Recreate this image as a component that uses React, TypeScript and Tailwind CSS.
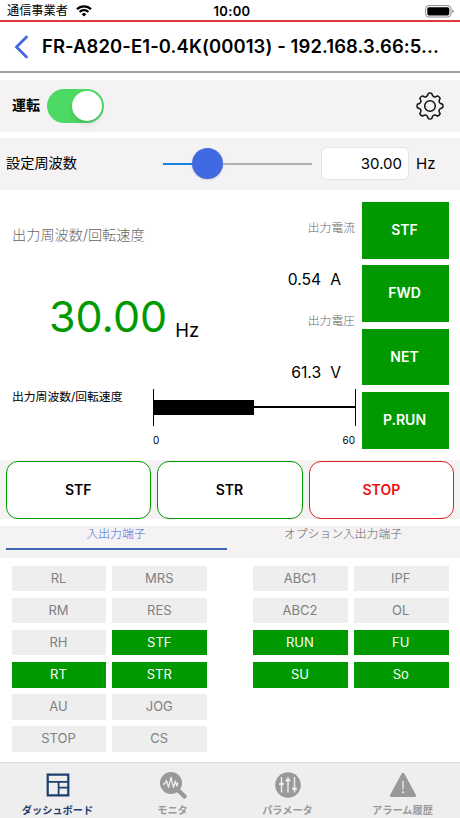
import React from 'react';

const GREEN = 'bg-[#009900]';

const statuses = ['STF', 'FWD', 'NET', 'P.RUN'];

const inputTerminals = [
  { name: 'RL', on: false },
  { name: 'MRS', on: false },
  { name: 'RM', on: false },
  { name: 'RES', on: false },
  { name: 'RH', on: false },
  { name: 'STF', on: true },
  { name: 'RT', on: true },
  { name: 'STR', on: true },
  { name: 'AU', on: false },
  { name: 'JOG', on: false },
  { name: 'STOP', on: false },
  { name: 'CS', on: false }
];

const outputTerminals = [
  { name: 'ABC1', on: false },
  { name: 'IPF', on: false },
  { name: 'ABC2', on: false },
  { name: 'OL', on: false },
  { name: 'RUN', on: true },
  { name: 'FU', on: true },
  { name: 'SU', on: true },
  { name: 'So', on: true }
];

const tabs = [
  { label: 'ダッシュボード', icon: DashboardIcon, active: true },
  { label: 'モニタ', icon: MonitorIcon, active: false },
  { label: 'パラメータ', icon: ParameterIcon, active: false },
  { label: 'アラーム履歴', icon: AlarmIcon, active: false }
];

// Eight-toothed outline: each tooth is a flat tip joined to the next by a valley
function gearPath() {
  const point = (radius: number, deg: number) => {
    const rad = (deg * Math.PI) / 180;
    return `${(14 + radius * Math.sin(rad)).toFixed(2)} ${(14 - radius * Math.cos(rad)).toFixed(2)}`;
  };
  let d = `M${point(12.7, -8)}`;
  for (let i = 0; i < 8; i++) {
    const a = i * 45;
    d += `Q${point(13.3, a)} ${point(12.7, a + 8)}`;
    d += `L${point(10.9, a + 13)}`;
    d += `Q${point(9.3, a + 22.5)} ${point(10.9, a + 32)}`;
    d += `L${point(12.7, a + 37)}`;
  }
  return `${d}Z`;
}

function GearIcon() {
  return (
    <svg width="28" height="28" viewBox="0 0 28 28" fill="none" stroke="#111" strokeWidth="1.5" strokeLinejoin="round">
      <path d={gearPath()} />
      <circle cx="14" cy="14" r="5.3" />
    </svg>
  );
}

function DashboardIcon() {
  return (
    <svg width="24" height="24" viewBox="0 0 24 24" fill="none" stroke="currentColor">
      <path d="M1.7 1.7h20.6v20.6H1.7z" strokeWidth="2.2" />
      <path d="M2 8.8h20M12.6 8.8v13.4M12.6 14.6H22" strokeWidth="1.8" />
    </svg>
  );
}

function MonitorIcon() {
  return (
    <svg width="28" height="28" viewBox="0 0 28 28" fill="none">
      <circle cx="12" cy="12" r="11" fill="currentColor" />
      <path d="M19.5 19.5l6 6" stroke="currentColor" strokeWidth="4.4" strokeLinecap="round" />
      <path d="M4 13h1.8l1.7-3.6 2 7L12 6.4l2.4 10 2-6.4 1.4 5 1.2-3.4" stroke="#eee" strokeWidth="1.3" strokeLinejoin="round" />
    </svg>
  );
}

function ParameterIcon() {
  return (
    <svg width="26" height="26" viewBox="0 0 26 26" fill="none">
      <circle cx="13" cy="13" r="12.8" fill="currentColor" />
      <path d="M6.5 5v15.5M13 5v15.5M19.5 5v15.5" stroke="#eee" strokeWidth="1.4" />
      <path d="M5.3 12h2.4M11.8 8.2h2.4M18.3 16.8h2.4" stroke="#eee" strokeWidth="2.6" strokeLinecap="round" />
    </svg>
  );
}

function AlarmIcon() {
  return (
    <svg width="28" height="26" viewBox="0 0 28 26" fill="none">
      <path d="M14 2.2L25.6 23.6H2.4z" fill="currentColor" stroke="currentColor" strokeWidth="3" strokeLinejoin="round" />
      <path d="M14 9.5v7.4" stroke="#eee" strokeWidth="1.3" strokeLinecap="round" />
      <circle cx="14" cy="20.2" r="1" fill="#eee" />
    </svg>
  );
}

function StatusBar() {
  return (
    <div className="grid h-5 shrink-0 grid-cols-3 items-center pt-[3px] pl-[10px] pr-1.5">
      <div className="-ml-[3px] flex items-center gap-2">
        <span className="text-[12.2px] leading-none">通信事業者</span>
        <svg width="16" height="12" viewBox="0 0 16 12" fill="none" stroke="#000" strokeWidth="2.3">
          <path d="M1 4.3a10 10 0 0 1 14 0" />
          <path d="M3.6 7a6.2 6.2 0 0 1 8.8 0" />
          <path d="M8 11.6L5.7 9.2a3.3 3.3 0 0 1 4.6 0z" fill="#000" stroke="none" />
        </svg>
      </div>
      <span className="text-center text-[13px] font-semibold leading-none tracking-[0.3px]">10:00</span>
      <div className="flex justify-end">
        <svg width="29" height="13" viewBox="0 0 29 13">
          <rect x="0.6" y="0.6" width="25.4" height="11.4" rx="3.2" fill="none" stroke="#8a8a8a" />
          <rect x="2.3" y="2.2" width="22" height="8.2" rx="1.6" />
          <path d="M27.2 4.3v4a2.2 2.2 0 0 0 0-4z" fill="#8a8a8a" />
        </svg>
      </div>
    </div>
  );
}

function TerminalGrid({ items }: { items: { name: string; on: boolean }[] }) {
  return (
    <div className="grid w-[195.6px] grid-cols-2 content-start gap-x-1.5 gap-y-[6.7px]">
      {items.map((item) => (
        <div
          key={item.name}
          className={`flex h-[25.5px] items-center justify-center pr-px text-[13px] ${item.on ? `${GREEN} text-white` : 'bg-[#eeeeee] text-[#808080]'}`}
        >
          {item.name}
        </div>
      ))}
    </div>
  );
}

export default function App() {
  return (
    <div className="flex h-[818px] w-[460px] flex-col overflow-hidden whitespace-nowrap bg-white font-[Inter,'Noto_Sans_CJK_JP',sans-serif] text-black">
      <StatusBar />

      <header className="flex h-[53px] shrink-0 items-center border-t-2 border-b-2 border-t-[#e0393d] border-b-[#9fa3a2] pl-[14px]">
        <svg width="15" height="24" viewBox="0 0 15 24" fill="none" stroke="#4169e1" strokeWidth="2.8" strokeLinecap="round">
          <path d="M12.5 2L2.5 12l10 10" />
        </svg>
        <h1 className="ml-[13px] pt-px text-[18.4px] font-semibold tracking-[0.12px]">
          FR-A820-E1-0.4K(00013) - 192.168.3.66:5...
        </h1>
      </header>

      <div className="mt-[7px] flex h-[52px] shrink-0 items-center bg-[#f4f2f3] pl-3 pr-4">
        <span className="pb-[3px] text-[14px] font-bold">運転</span>
        <div className="ml-[7px] flex h-[34px] w-[57px] items-center justify-end rounded-full bg-[#4cd964] pr-[2px]">
          <div className="h-[30px] w-[30px] rounded-full bg-white shadow-md" />
        </div>
        <div className="ml-auto">
          <GearIcon />
        </div>
      </div>

      <div className="mt-1.5 flex h-[52px] shrink-0 items-center bg-[#f4f2f3] pl-1.5 pb-px">
        <span className="w-[157px] pb-px text-[14.2px]">設定周波数</span>
        <div className="flex w-[149px] items-center">
          <div className="h-[2px] w-[29px] bg-[#1a82e0]" />
          <div className="h-[31px] w-[31px] rounded-full bg-[#4169e1] shadow" />
          <div className="h-[2px] flex-1 bg-[#b1b0b1]" />
        </div>
        <div className="ml-[9px] flex h-[33px] w-[88px] items-center justify-end rounded-md border border-[#e4e4e4] bg-white pt-px pr-1.5 text-[15px]">
          30.00
        </div>
        <span className="ml-[7px] pt-px text-[15px]">Hz</span>
      </div>

      <section className="flex h-[270px] shrink-0">
        <div className="w-[362px]">
          <div className="flex h-[198.5px]">
            <div className="w-[242px] pl-3 pt-[35px]">
              <p className="text-[14.2px] leading-5 font-light text-[#666]">出力周波数/回転速度</p>
              <div className="mt-[45px] flex items-baseline pl-[37px]">
                <span className="text-[43px] leading-[52px] text-[#009900]">30.00</span>
                <span className="relative top-[5px] ml-2 text-[18.5px]">Hz</span>
              </div>
            </div>
            <div className="flex-1 pt-7 pr-[7px] text-right">
              <p className="text-[11.8px] leading-5 font-light text-[#666]">出力電流</p>
              <p className="mt-8 flex justify-end pr-[14px] text-[15.7px] leading-5">
                0.54<span className="ml-[9px]">A</span>
              </p>
              <p className="mt-[21px] text-[11.8px] leading-5 font-light text-[#666]">出力電圧</p>
              <p className="mt-8 flex justify-end pr-[14px] text-[15.7px] leading-5">
                61.3<span className="ml-[9px]">V</span>
              </p>
            </div>
          </div>
          <div className="flex pl-3">
            <span className="w-[141px] text-[11.8px] leading-[17px]">出力周波数/回転速度</span>
            <div className="w-[203px]">
              <div className="flex h-[37px] items-center border-x-[1.5px] border-black">
                <div className="h-[15px] w-[100px] bg-black" />
                <div className="h-[2px] flex-1 bg-black" />
              </div>
              <div className="mt-[7px] flex justify-between pr-px text-[10px] leading-[14px]">
                <span>0</span>
                <span>60</span>
              </div>
            </div>
          </div>
        </div>
        <div className="flex w-[87px] flex-col gap-[6.6px] pt-3">
          {statuses.map((status) => (
            <div
              key={status}
              className={`flex h-[56.7px] items-center justify-center pr-[2px] pb-[1.5px] text-[14px] font-semibold text-white ${GREEN}`}
            >
              {status}
            </div>
          ))}
        </div>
      </section>

      <div className="grid h-[59px] shrink-0 grid-cols-3 gap-1.5 bg-[#f4f2f3] px-1.5 pt-px text-[14px] font-semibold">
        <button className="rounded-xl border border-[#009900] bg-white pr-px pb-[2px]">STF</button>
        <button className="rounded-xl border border-[#009900] bg-white pr-px pb-[2px]">STR</button>
        <button className="rounded-xl border border-[#e02020] bg-white pb-[2px] text-[#e81010]">STOP</button>
      </div>

      <div className="mt-[7px] flex h-8 shrink-0 gap-1.5 bg-[#f4f2f3] pl-1.5 text-[11.8px] leading-4 font-light">
        <div className="h-6 w-[221px] border-b-2 border-[#3b67b4] pr-px text-center text-[#4169e1]">入出力端子</div>
        <div className="w-[221px] pr-px text-center text-[#666]">オプション入出力端子</div>
      </div>

      <main className="flex flex-1 justify-between pt-[7.5px] pl-[11.6px] pr-[11.4px]">
        <TerminalGrid items={inputTerminals} />
        <TerminalGrid items={outputTerminals} />
      </main>

      <nav className="grid h-14 shrink-0 grid-cols-4 border-t border-[#d8d8d8] bg-[#eeeeee]">
        {tabs.map((tab) => (
          <div
            key={tab.label}
            className={`flex flex-col items-center pt-2 text-[10.2px] leading-3 font-bold ${tab.active ? 'text-[#1d3f70]' : 'text-[#999999]'}`}
          >
            <div className="flex h-[27px] items-center">
              <tab.icon />
            </div>
            <span className="mt-1.5">{tab.label}</span>
          </div>
        ))}
      </nav>
    </div>
  );
}
